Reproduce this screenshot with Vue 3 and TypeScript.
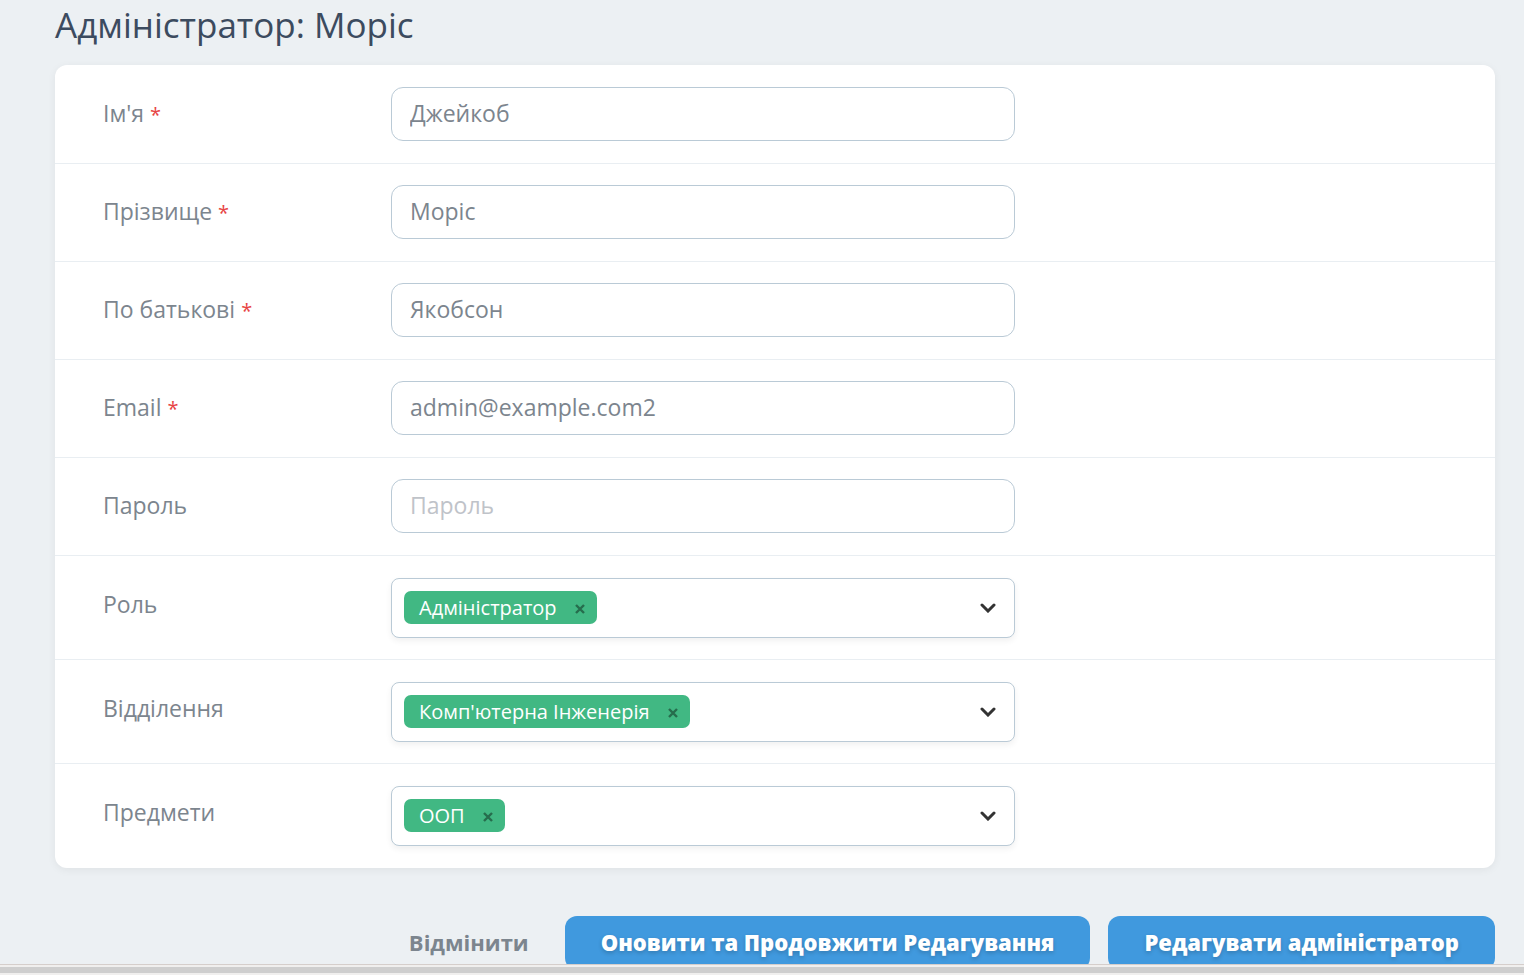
<script setup lang="ts">
import { ref } from 'vue'

interface TextField {
  id: string
  label: string
  type: string
  value: string
  required: boolean
  placeholder: string
}

interface TagField {
  id: string
  label: string
  tags: string[]
}

const textFields = ref<TextField[]>([
  { id: 'first-name', label: "Ім'я", type: 'text', value: 'Джейкоб', required: true, placeholder: "Ім'я" },
  { id: 'last-name', label: 'Прізвище', type: 'text', value: 'Моріс', required: true, placeholder: 'Прізвище' },
  { id: 'patronymic', label: 'По батькові', type: 'text', value: 'Якобсон', required: true, placeholder: 'По батькові' },
  { id: 'email', label: 'Email', type: 'email', value: 'admin@example.com2', required: true, placeholder: 'Email' },
  { id: 'password', label: 'Пароль', type: 'password', value: '', required: false, placeholder: 'Пароль' },
])

const tagFields = ref<TagField[]>([
  { id: 'role', label: 'Роль', tags: ['Адміністратор'] },
  { id: 'department', label: 'Відділення', tags: ["Комп'ютерна Інженерія"] },
  { id: 'subjects', label: 'Предмети', tags: ['ООП'] },
])

function removeTag(field: TagField, tag: string): void {
  field.tags = field.tags.filter((item) => item !== tag)
}
</script>

<template>
  <div class="page">
    <main class="content">
      <h1 class="title">Адміністратор: Моріс</h1>
      <form class="form" novalidate @submit.prevent>
        <div class="card">
          <div v-for="field in textFields" :key="field.id" class="row">
            <label class="label" :for="field.id">
              {{ field.label }} <span v-if="field.required" class="required">*</span>
            </label>
            <div class="control">
              <input
                :id="field.id"
                v-model="field.value"
                class="input"
                :type="field.type"
                :placeholder="field.placeholder"
                autocomplete="off"
              />
            </div>
          </div>
          <div v-for="field in tagFields" :key="field.id" class="row row-tags">
            <label class="label" :for="field.id">{{ field.label }}</label>
            <div class="control">
              <div class="multiselect">
                <span v-for="tag in field.tags" :key="tag" class="tag">
                  {{ tag }}
                  <button class="remove" type="button" :aria-label="'Видалити ' + tag" @click="removeTag(field, tag)">
                    <svg width="10" height="10" viewBox="0 0 10 10" aria-hidden="true">
                      <path d="M1 1l8 8M9 1l-8 8" fill="none" stroke="currentColor" stroke-width="2.4" />
                    </svg>
                  </button>
                </span>
                <select :id="field.id" class="select">
                  <option value=""></option>
                  <option v-for="tag in field.tags" :key="tag">{{ tag }}</option>
                </select>
                <svg class="chevron" width="16" height="10" viewBox="0 0 16 10" aria-hidden="true">
                  <path d="M2 2l6 6 6-6" fill="none" stroke="currentColor" stroke-width="3" stroke-linecap="round" />
                </svg>
              </div>
            </div>
          </div>
        </div>
        <div class="actions">
          <a class="cancel" href="#">Відмінити</a>
          <button class="button" type="submit">Оновити та Продовжити Редагування</button>
          <button class="button" type="submit">Редагувати адміністратор</button>
        </div>
      </form>
    </main>
    <div class="scrollbar"><div class="thumb"></div></div>
  </div>
</template>

<style>
body {
  margin: 0;
  background: #ecf0f3;
}
</style>

<style scoped>
.page {
  display: flex;
  flex-direction: column;
  height: 100vh;
  background: #ecf0f3;
  color: #7c858e;
  font-family: "Open Sans", "Noto Sans", sans-serif;
  font-size: 23px;
  line-height: 32px;
}

.page * {
  box-sizing: border-box;
}

.content {
  flex: 1;
  min-height: 0;
  overflow: hidden;
  padding: 0 29px 0 55px;
}

.title {
  margin: 0;
  padding-bottom: 15px;
  color: #3c4b5f;
  font-size: 35px;
  font-weight: 400;
  line-height: 50px;
}

.card {
  background: #fff;
  border-radius: 12px;
  box-shadow: 0 2px 8px rgba(0, 0, 0, 0.06);
}

.row {
  display: grid;
  grid-template-columns: 20% 50%;
  padding: 21px 0 22px;
  border-top: 1px solid #e9eef2;
}

.row:first-child {
  border-top-color: transparent;
}

.row-tags {
  padding: 22px 0 21px;
}

.row-tags:last-child {
  padding-bottom: 22px;
}

.label {
  padding: 10px 0 0 48px;
}

.required {
  color: #e74444;
  font-size: 20px;
}

.control {
  padding: 0 48px;
}

.input {
  display: block;
  width: 100%;
  height: 54px;
  padding: 0 18px 2px;
  border: 1px solid #bacad6;
  border-radius: 12px;
  background: #fff;
  color: inherit;
  font: inherit;
}

.input::placeholder {
  color: #bfc3c9;
  opacity: 1;
}

.multiselect {
  position: relative;
  display: flex;
  gap: 8px;
  align-items: flex-start;
  height: 60px;
  padding: 12px;
  border: 1px solid #bacad6;
  border-radius: 8px;
  background: #fff;
  box-shadow: 0 3px 6px rgba(0, 0, 0, 0.06);
}

.tag {
  display: flex;
  align-items: center;
  gap: 18px;
  height: 33px;
  padding: 0 12px 0 15px;
  border-radius: 7px;
  background: #41b883;
  color: #fff;
  font-size: 20px;
}

.remove {
  display: flex;
  padding: 2px 0 0;
  border: 0;
  background: none;
  color: #266d4d;
}

.select {
  flex: 1;
  height: 100%;
  border: 0;
  background: transparent;
  font: inherit;
  appearance: none;
}

.chevron {
  position: absolute;
  top: 24px;
  right: 18px;
  color: #333;
  pointer-events: none;
}

.actions {
  display: flex;
  align-items: center;
  justify-content: flex-end;
  gap: 18px;
  padding-top: 48px;
  font-size: 22px;
}

.cancel {
  margin-right: 18px;
  padding-bottom: 2px;
  color: inherit;
  font-weight: 700;
  text-decoration: none;
}

.button {
  height: 54px;
  padding: 0 36px 2px;
  border: 0;
  border-radius: 12px;
  background: #4099de;
  color: #fff;
  font: inherit;
  font-weight: 800;
  text-shadow: 0 2px 4px rgba(0, 0, 0, 0.2);
}

.scrollbar {
  flex: none;
  height: 11px;
  padding: 2px 0;
  border-top: 1px solid #d5cecb;
  background: #f0efee;
}

.thumb {
  height: 6px;
  background: #cecece;
}
</style>
